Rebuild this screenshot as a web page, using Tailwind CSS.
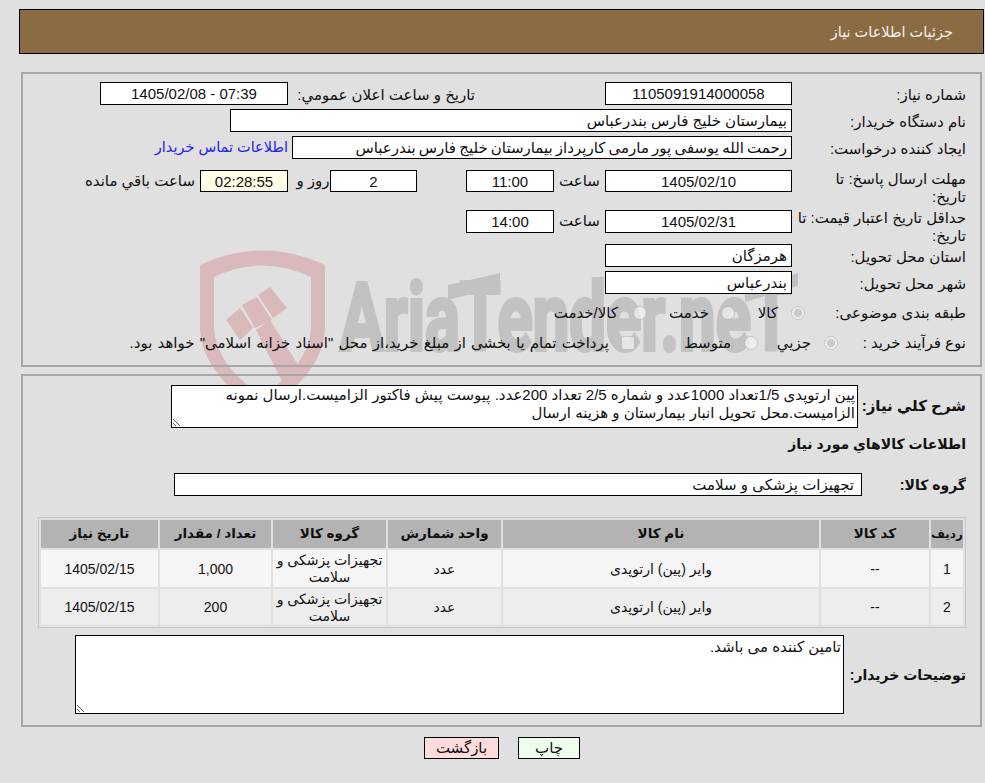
<!DOCTYPE html>
<html lang="fa" dir="rtl">
<head>
    <meta charset="UTF-8">
    <title>جزئیات اطلاعات نیاز</title>
    <script src="https://cdn.jsdelivr.net/npm/@tailwindcss/browser@4"></script>
</head>
<body class="bg-[#e0e0e0] text-[#111] text-[15px] leading-[18px] font-['Liberation_Sans','DejaVu_Sans',sans-serif] overflow-hidden">
<div class="relative w-[985px] h-[783px] overflow-hidden">

    <!-- watermark sits behind the form -->
    <svg class="absolute left-0 top-0 z-0 [direction:ltr]" width="985" height="783" viewBox="0 0 985 783">
        <path d="M200 265Q262 236 325 265V330Q322 375 262 412Q203 375 200 330Z M214 277V328Q216 365 262 396Q309 365 311 328V277Q262 254 214 277Z" fill="#d9b9bb" fill-rule="evenodd"/>
        <path d="M258 295L270 287L287 308L273 318Z M242 305L257 297L272 320L255 328Z M226 320L240 308L253 328L240 340Z" fill="#d9b9bb"/>
        <path d="M256 330L270 320L300 368L284 385Z" fill="#d9b9bb"/>
        <text x="340" y="350" transform="translate(340 0) scale(0.74 1) translate(-340 0)" textLength="610" lengthAdjust="spacingAndGlyphs" font-family="Roboto" font-weight="700" font-size="94" fill="#c2c2c2" stroke="#c2c2c2" stroke-width="4">AriaTender.neT</text>
        <path d="M448 285L500 273V286L448 300Z M745 288L798 273V286L745 302Z" fill="#c2c2c2"/>
    </svg>

    <div class="relative z-10 pt-[9px]">
        <div class="ml-[19px] mr-px h-[45px] border border-black bg-[#8b6b42] flex items-center pr-[30px] text-[14.5px] text-[#f4f4f4]">جزئیات اطلاعات نیاز</div>

        <!-- first panel -->
        <section class="mt-[18px] ml-[21px] mr-[3px] h-[295px] border-2 border-[#a6a6a6] pr-[14px] pt-2">
            <div class="flex h-[27px]">
                <label class="w-[174px] pt-1">شماره نیاز:</label>
                <input readonly value="1105091914000058" class="w-[187px] h-[23px] border border-black bg-white text-center">
                <label class="w-[317px] pr-[130px] pt-1">تاریخ و ساعت اعلان عمومي:</label>
                <input readonly dir="ltr" value="1405/02/08 - 07:39" class="w-[188px] h-[23px] border border-black bg-white text-center">
            </div>
            <div class="flex h-[27px]">
                <label class="w-[174px] pt-1">نام دستگاه خریدار:</label>
                <input readonly value="بیمارستان خلیج فارس بندرعباس" class="w-[562px] h-[23px] border border-black bg-white px-1">
            </div>
            <div class="flex h-[34px]">
                <label class="w-[174px] pt-1">ایجاد کننده درخواست:</label>
                <input readonly value="رحمت الله یوسفی پور مارمی کارپرداز بیمارستان خلیج فارس بندرعباس" class="w-[500px] h-[23px] border border-black bg-white px-1 [word-spacing:-1px]">
                <a href="#" class="mr-1 pt-0.5 text-[14.5px] text-[#2222ee]">اطلاعات تماس خریدار</a>
            </div>
            <div class="flex h-[40px]">
                <label class="w-[174px] whitespace-nowrap">مهلت ارسال پاسخ: تا<br>تاریخ:</label>
                <input readonly value="1405/02/10" class="w-[187px] h-[22px] border border-black bg-white text-center">
                <span class="w-[51px] pt-0.5 text-center">ساعت</span>
                <input readonly value="11:00" class="w-[88px] h-[22px] border border-black bg-white text-center">
                <span class="w-[49px]"></span>
                <input readonly value="2" class="w-[87px] h-[22px] border border-black bg-white text-center">
                <span class="w-[42px] pl-[8px] pt-0.5 text-center">روز و</span>
                <input readonly value="02:28:55" class="w-[88px] h-[22px] border border-black bg-[#ffffe8] text-center">
                <span class="mr-[5px] pt-0.5">ساعت باقي مانده</span>
            </div>
            <div class="flex h-[34px]">
                <label class="w-[174px] -mt-px whitespace-nowrap">حداقل تاریخ اعتبار قیمت: تا<br>تاریخ:</label>
                <input readonly value="1405/02/31" class="w-[187px] h-[23px] border border-black bg-white text-center">
                <span class="w-[51px] pt-0.5 text-center">ساعت</span>
                <input readonly value="14:00" class="w-[88px] h-[23px] border border-black bg-white text-center">
            </div>
            <div class="flex h-[27px]">
                <label class="w-[174px] pt-1">استان محل تحویل:</label>
                <input readonly value="هرمزگان" class="w-[187px] h-[23px] border border-black bg-white px-1">
            </div>
            <div class="flex h-[27px]">
                <label class="w-[174px] pt-1">شهر محل تحویل:</label>
                <input readonly value="بندرعباس" class="w-[187px] h-[23px] border border-black bg-white px-1">
            </div>
            <div class="flex items-center h-[30px]">
                <label class="w-[161px]">طبقه بندی موضوعی:</label>
                <input type="radio" disabled checked name="kind" class="size-[14px] m-0">
                <span class="w-[56px] pr-[13px]">کالا</span>
                <input type="radio" disabled name="kind" class="size-[14px] m-0">
                <span class="w-[74px] pr-[12px]">خدمت</span>
                <input type="radio" disabled name="kind" class="size-[14px] m-0">
                <span class="pr-[15px]">کالا/خدمت</span>
            </div>
            <div class="flex items-center h-[30px]">
                <label class="w-[128px]">نوع فرآیند خرید :</label>
                <input type="radio" disabled checked name="proc" class="size-[14px] m-0">
                <span class="w-[66px] pr-[13px]">جزيي</span>
                <input type="radio" disabled name="proc" class="size-[14px] m-0">
                <span class="w-[109px] pr-[13px]">متوسط</span>
                <input type="checkbox" disabled class="size-[14px] m-0">
                <span class="pr-[12px] [word-spacing:1px]">پرداخت تمام یا بخشی از مبلغ خرید،از محل "اسناد خزانه اسلامی" خواهد بود.</span>
            </div>
        </section>

        <!-- second panel -->
        <section class="mt-[7px] ml-[21px] mr-[3px] h-[353px] border-2 border-[#a6a6a6] pr-[14px] pt-2">
            <div class="flex items-center h-[44px]">
                <label class="w-[108px] font-bold whitespace-nowrap">شرح کلي نیاز:</label>
                <textarea readonly class="w-[687px] h-[43px] border border-black bg-white px-[2px] py-0 leading-[18px] align-top">پین ارتوپدی 1/5تعداد 1000عدد و شماره 2/5 تعداد 200عدد. پیوست پیش فاکتور الزامیست.ارسال نمونه الزامیست.محل تحویل انبار بیمارستان و هزینه ارسال</textarea>
            </div>
            <div class="mt-[6px] h-[24px] text-sm font-bold">اطلاعات کالاهاي مورد نیاز</div>
            <div class="flex items-center mt-[15px] h-[23px]">
                <label class="w-[104px] text-sm font-bold whitespace-nowrap">گروه کالا:</label>
                <input readonly value="تجهیزات پزشکی و سلامت" class="w-[688px] h-[23px] border border-black bg-white px-[7px]">
            </div>
            <table class="mt-[21px] w-[928px] table-fixed border-separate border-spacing-[2px] border border-[#c8c8c8] text-center">
                <thead>
                    <tr class="h-[28px] bg-[#b3b3b3] text-[13.5px] font-bold">
                        <th class="w-[32px] text-xs font-bold">ردیف</th>
                        <th class="w-[108px] font-bold">کد کالا</th>
                        <th class="w-[316px] font-bold">نام کالا</th>
                        <th class="w-[113px] font-bold">واحد شمارش</th>
                        <th class="w-[113px] font-bold">گروه کالا</th>
                        <th class="w-[111px] font-bold">تعداد / مقدار</th>
                        <th class="font-bold">تاریخ نیاز</th>
                    </tr>
                </thead>
                <tbody class="text-sm leading-[17px] [&_td]:pt-px">
                    <tr class="h-[37px] bg-[#f5f5f5]">
                        <td>1</td><td>--</td><td>وایر (پین) ارتوپدی</td><td>عدد</td><td>تجهیزات پزشکی و سلامت</td><td>1,000</td><td>1405/02/15</td>
                    </tr>
                    <tr class="h-[36px] bg-[#ededed]">
                        <td>2</td><td>--</td><td>وایر (پین) ارتوپدی</td><td>عدد</td><td>تجهیزات پزشکی و سلامت</td><td>200</td><td>1405/02/15</td>
                    </tr>
                </tbody>
            </table>
            <div class="flex items-center mt-[7px] h-[79px]">
                <label class="w-[122px] text-sm font-bold whitespace-nowrap">توضیحات خریدار:</label>
                <textarea readonly class="w-[769px] h-[79px] border border-black bg-white px-[2px] py-0.5 leading-[18px]">تامین کننده می باشد.</textarea>
            </div>
        </section>

        <div class="flex justify-center gap-[19px] mt-[10px] pl-[19px]">
            <button class="w-[62px] h-[22px] border border-black bg-[#eeffee] text-[#111]">چاپ</button>
            <button class="w-[75px] h-[22px] border border-black bg-[#ffdcdc] text-[#111]">بازگشت</button>
        </div>
    </div>
</div>
</body>
</html>
